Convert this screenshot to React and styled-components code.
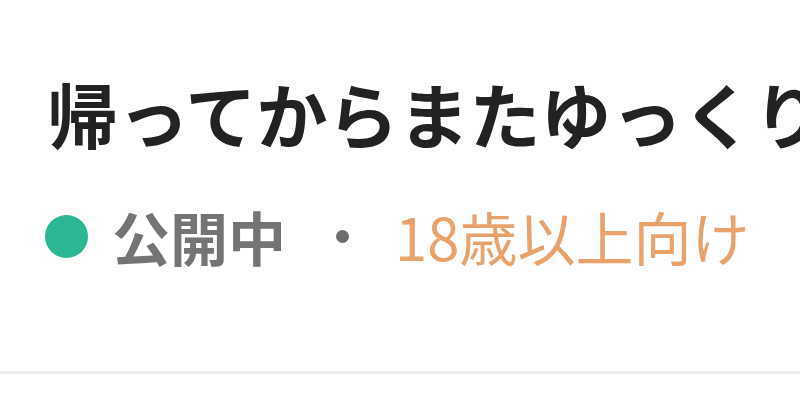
import React from "react";
import styled, { createGlobalStyle } from "styled-components";

const GlobalStyle = createGlobalStyle`
  html, body {
    margin: 0;
    padding: 0;
    background: #fff;
  }
  body {
    font-family: "Noto Sans CJK JP", "Noto Sans", sans-serif;
  }
`;

const Page = styled.div`
  width: 800px;
  height: 419px;
  overflow: hidden;
  display: flex;
  flex-direction: column;
`;

const Header = styled.div`
  padding: 64px 0 0 47px;
  height: 304px;
  box-sizing: border-box;
`;

const Title = styled.h1`
  margin: 0;
  font-size: 71px;
  font-weight: 700;
  line-height: 96px;
  color: #222222;
  white-space: nowrap;
`;

const Meta = styled.div`
  display: flex;
  align-items: center;
  margin-top: 46px;
  margin-left: -2px;
  height: 60px;
`;

const StatusDot = styled.span`
  width: 43px;
  height: 43px;
  border-radius: 50%;
  background: #2cb696;
  flex-shrink: 0;
`;

const MetaText = styled.span`
  font-size: 58px;
  line-height: 60px;
  font-weight: ${(p) => (p.$bold ? 700 : 400)};
  color: ${(p) => p.$color};
  white-space: nowrap;
`;

const Status = styled(MetaText)`
  margin-left: 24px;
`;

const Separator = styled.span`
  width: 13px;
  height: 13px;
  border-radius: 50%;
  background: #6d6d6d;
  margin: 0 46px 0 50px;
  flex-shrink: 0;
`;

const Divider = styled.div`
  height: 3px;
  background: #eeeeee;
  margin-top: 67px;
`;

export default function App() {
  return (
    <>
      <GlobalStyle />
      <Page>
        <Header>
          <Title>帰ってからまたゆっくり</Title>
          <Meta>
            <StatusDot />
            <Status $bold $color="#747474">公開中</Status>
            <Separator />
            <MetaText $color="#e9a26c">18歳以上向け</MetaText>
          </Meta>
        </Header>
        <Divider />
      </Page>
    </>
  );
}
